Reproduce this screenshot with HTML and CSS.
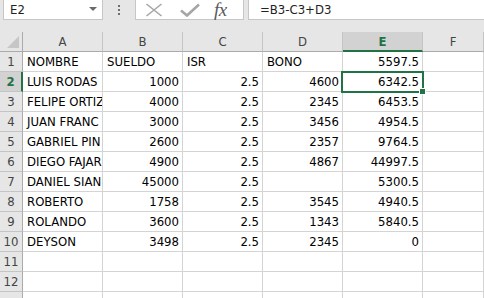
FILE: index.html
```html
<!DOCTYPE html>
<html>
<head>
<meta charset="utf-8">
<link rel="stylesheet" href="styles.css">
</head>
<body>
<div class="toolbar">
  <div class="namebox"><span class="cellref">E2</span><span class="caret"></span></div>
  <div class="dots"><i></i><i></i><i></i></div>
  <div class="fxbox">
    <svg class="ico" width="18" height="14" viewBox="0 0 18 14"><path d="M1.5 1 L16.5 13 M16.5 1 L1.5 13" stroke="#a6a6a6" stroke-width="1.6" fill="none"/></svg>
    <svg class="ico" width="20" height="14" viewBox="0 0 20 14"><path d="M1 7.5 L7 12.5 L19 1.5" stroke="#a6a6a6" stroke-width="2.6" fill="none"/></svg>
    <span class="fx">fx</span>
  </div>
  <div class="formula">=B3-C3+D3</div>
</div>
<div class="gap"></div>
<div class="sheet">
  <div class="hd corner"></div>
  <div class="hd col">A</div><div class="hd col">B</div><div class="hd col">C</div><div class="hd col">D</div><div class="hd col on">E</div><div class="hd col">F</div>

  <div class="hd row">1</div>
  <div class="c">NOMBRE</div><div class="c">SUELDO</div><div class="c">ISR</div><div class="c">BONO</div><div class="c n">5597.5</div><div class="c"></div>

  <div class="hd row on">2</div>
  <div class="c">LUIS RODAS</div><div class="c n">1000</div><div class="c n">2.5</div><div class="c n">4600</div><div class="c n sel">6342.5</div><div class="c"></div>

  <div class="hd row">3</div>
  <div class="c">FELIPE ORTIZ</div><div class="c n">4000</div><div class="c n">2.5</div><div class="c n">2345</div><div class="c n">6453.5</div><div class="c"></div>

  <div class="hd row">4</div>
  <div class="c">JUAN FRANC</div><div class="c n">3000</div><div class="c n">2.5</div><div class="c n">3456</div><div class="c n">4954.5</div><div class="c"></div>

  <div class="hd row">5</div>
  <div class="c">GABRIEL PIN</div><div class="c n">2600</div><div class="c n">2.5</div><div class="c n">2357</div><div class="c n">9764.5</div><div class="c"></div>

  <div class="hd row">6</div>
  <div class="c">DIEGO FAJAR</div><div class="c n">4900</div><div class="c n">2.5</div><div class="c n">4867</div><div class="c n">44997.5</div><div class="c"></div>

  <div class="hd row">7</div>
  <div class="c">DANIEL SIAN</div><div class="c n">45000</div><div class="c n">2.5</div><div class="c n"></div><div class="c n">5300.5</div><div class="c"></div>

  <div class="hd row">8</div>
  <div class="c">ROBERTO</div><div class="c n">1758</div><div class="c n">2.5</div><div class="c n">3545</div><div class="c n">4940.5</div><div class="c"></div>

  <div class="hd row">9</div>
  <div class="c">ROLANDO</div><div class="c n">3600</div><div class="c n">2.5</div><div class="c n">1343</div><div class="c n">5840.5</div><div class="c"></div>

  <div class="hd row">10</div>
  <div class="c">DEYSON</div><div class="c n">3498</div><div class="c n">2.5</div><div class="c n">2345</div><div class="c n">0</div><div class="c"></div>

  <div class="hd row">11</div>
  <div class="c"></div><div class="c"></div><div class="c"></div><div class="c"></div><div class="c"></div><div class="c"></div>

  <div class="hd row">12</div>
  <div class="c"></div><div class="c"></div><div class="c"></div><div class="c"></div><div class="c"></div><div class="c"></div>

  <div class="hd row"></div>
  <div class="c"></div><div class="c"></div><div class="c"></div><div class="c"></div><div class="c"></div><div class="c"></div>
</div>
</body>
</html>
```

FILE: styles.css
```css
html, body {
  margin: 0;
  padding: 0;
}
body {
  width: 484px;
  height: 298px;
  overflow: hidden;
  background: #ffffff;
  font-family: "DejaVu Sans Condensed", "Liberation Sans", sans-serif;
  font-stretch: condensed;
  font-size: 13px;
  color: #000;
}

.toolbar {
  display: flex;
  height: 20px;
  background: #e6e6e6;
}
.namebox {
  box-sizing: border-box;
  margin-left: 3px;
  width: 100px;
  height: 20px;
  background: #fff;
  border: 1px solid #c6c6c6;
  border-top: none;
  display: flex;
  align-items: center;
  justify-content: space-between;
  padding: 0 5px 0 6px;
}
.cellref {
  font-size: 13px;
  color: #222;
}
.caret {
  width: 0;
  height: 0;
  border-left: 4px solid transparent;
  border-right: 4px solid transparent;
  border-top: 4px solid #6a6a6a;
  margin-bottom: 2px;
}
.dots {
  width: 32px;
  display: flex;
  flex-direction: column;
  align-items: center;
  justify-content: center;
  gap: 2px;
  padding-bottom: 1px;
}
.dots i {
  display: block;
  width: 2px;
  height: 2px;
  background: #6f6f6f;
}
.fxbox {
  box-sizing: border-box;
  width: 109px;
  height: 20px;
  background: #fff;
  border: 1px solid #c6c6c6;
  border-top: none;
  display: flex;
  align-items: center;
  padding-left: 9px;
  gap: 0;
}
.fxbox .ico {
  display: block;
}
.fxbox .ico:first-child {
  margin-right: 17px;
}
.fxbox .ico + .ico {
  margin-right: 14px;
}
.fx {
  font-family: "Liberation Serif", serif;
  font-style: italic;
  font-size: 19px;
  color: #5a5a5a;
  line-height: 18px;
  letter-spacing: -0.5px;
}
.formula {
  box-sizing: border-box;
  flex: 1;
  margin-left: 4px;
  height: 20px;
  background: #fff;
  border: 1px solid #c6c6c6;
  border-top: none;
  border-right: none;
  padding-left: 11px;
  line-height: 19px;
  font-size: 13px;
  color: #222;
}

.gap {
  height: 12px;
  background: #e6e6e6;
}

.sheet {
  display: grid;
  grid-template-columns: 23px repeat(5, 80px) 1fr;
  grid-auto-rows: 20px;
}
.sheet > div {
  box-sizing: border-box;
  border-right: 1px solid #d4d4d4;
  border-bottom: 1px solid #d4d4d4;
  overflow: hidden;
  white-space: nowrap;
  line-height: 19px;
}
.hd {
  background: #e6e6e6;
  color: #444;
  text-align: center;
}
.sheet > .hd.col {
  border-right-color: #c4c4c4;
  border-bottom-color: #ababab;
}
.sheet > .hd.row {
  border-right-color: #ababab;
  border-bottom-color: #c4c4c4;
}
.sheet > .hd.corner {
  position: relative;
  border-right-color: #ababab;
  border-bottom-color: #ababab;
}
.corner::after {
  content: "";
  position: absolute;
  right: 3px;
  bottom: 3px;
  width: 0;
  height: 0;
  border-left: 12px solid transparent;
  border-bottom: 12px solid #c6c6c6;
}
.sheet > .hd.on {
  background: #d2d2d2;
  color: #217346;
  font-weight: bold;
}
.sheet > .hd.col.on {
  border-bottom: 2px solid #217346;
}
.sheet > .hd.row.on {
  border-right: 2px solid #217346;
}
.c {
  padding: 0 3px 0 4px;
}
.c.n {
  text-align: right;
}
.sheet > .c.sel {
  position: relative;
  overflow: visible;
}
.sel::after {
  content: "";
  position: absolute;
  left: -2px;
  top: -1px;
  right: -2px;
  bottom: -2px;
  border: 2px solid #217346;
  pointer-events: none;
}
.sel::before {
  content: "";
  position: absolute;
  right: -4px;
  bottom: -4px;
  width: 5px;
  height: 5px;
  background: #217346;
  border: 1px solid #fff;
  z-index: 2;
}
```
